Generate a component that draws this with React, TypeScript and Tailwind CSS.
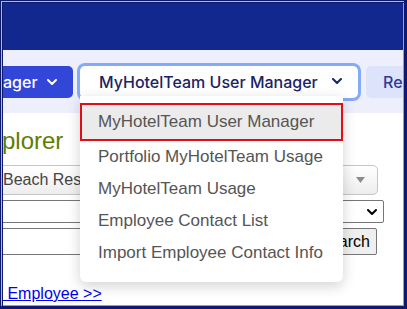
import React from 'react';

function Chevron({ className }: { className?: string }) {
  return (
    <svg className={className} width="10" height="6" viewBox="0 0 10 6" fill="none">
      <polyline points="1,1 5,5 9,1" stroke="currentColor" strokeWidth="2" strokeLinecap="round" strokeLinejoin="round" />
    </svg>
  );
}

export default function App() {
  const items = [
    'Portfolio MyHotelTeam Usage',
    'MyHotelTeam Usage',
    'Employee Contact List',
    'Import Employee Contact Info',
  ];

  return (
    <div className="w-[407px] h-[309px] bg-[#0d1a6e] pl-[1px] pt-[1px] pr-[3px] pb-[3px] overflow-hidden">
      <div className="w-full h-full border-t border-l border-[#aab6f2] pl-[1px] pt-[1px] bg-[#0d1a6e]">
        <div className="w-full h-full border-r border-b border-r-[#a0a0a0] border-b-[#a0a0a0]">
          <div className="relative w-full h-full bg-white overflow-hidden" style={{ fontFamily: '"Liberation Sans", Arial, sans-serif' }}>
            {/* header */}
            <div className="h-[47px] bg-[#13288e]" />

            {/* nav */}
            <div
              className="h-[63px] bg-[#edf0fc] flex items-center gap-[7px] overflow-hidden"
              style={{ fontFamily: 'Inter, "Noto Sans", sans-serif' }}
            >
              <div className="h-[32px] w-[70px] shrink-0 bg-[#3247d8] rounded-r-[5px] flex items-center text-white text-[16px] font-medium">
                <span>ager</span>
                <Chevron className="ml-[9px] text-white" />
              </div>
              <div className="h-[32px] w-[278px] shrink-0 bg-white rounded-[5px] ring-[3px] ring-[#84abf7] flex items-center pl-[19px] text-[16px] font-medium text-[#1b2363] mt-[1px]">
                <span>MyHotelTeam User Manager</span>
                <Chevron className="ml-auto mr-[16px] text-[#1b2363] -mt-[3px]" />
              </div>
              <div className="h-[32px] w-[80px] shrink-0 bg-[#dde3fb] rounded-[5px] flex items-center pl-[17px] text-[16px] font-medium text-[#2b3a9c] ml-[1px]">
                Re
              </div>
            </div>

            {/* page body */}
            <div className="flex flex-col pt-[13px]">
              <div className="text-[24px] leading-[30px] text-[#5e7d00] -ml-[1px]">plorer</div>
              <div className="mt-[9px] h-[30px] w-[381px] -ml-[6px] rounded-[5px] border border-[#c6c6c6] bg-gradient-to-b from-white to-[#ededed] flex items-center pl-[5px] pr-[12px] text-[16px] text-[#444]">
                <span className="flex-1">Beach Resort</span>
                <svg width="9" height="6" viewBox="0 0 9 6">
                  <polygon points="0,0 9,0 4.5,6" fill="#8c8c8c" />
                </svg>
              </div>
              <div className="mt-[5px] h-[23px] w-[387px] -ml-[6px] rounded-[2px] border border-[#767676] bg-white flex items-center justify-end pr-[6px]">
                <Chevron className="text-black" />
              </div>
              <div className="mt-[5px] flex items-center">
                <div className="h-[27px] w-[320px] -ml-[6px] border border-[#767676] bg-white" />
                <button className="ml-auto mr-[26px] h-[27px] px-[6px] border border-[#767676] rounded-[2px] bg-[#efefef] text-[16px] text-black">
                  Search
                </button>
              </div>
              <div className="mt-[30px] text-[16px] leading-[18px]">
                <a href="#" className="text-[#0000ee] underline">&nbsp;Employee &gt;&gt;</a>
              </div>
            </div>

            {/* dropdown menu */}
            <div className="absolute left-[77px] top-[93px] w-[263px] bg-white rounded-b-[6px] shadow-[0_4px_14px_rgba(0,0,0,0.18)] pt-[7px] pb-[13px] text-[17px] text-[#555]">
              <div className="h-[38px] border-2 border-[#e20d17] bg-[#ebebeb] flex items-center pl-[16px]">
                MyHotelTeam User Manager
              </div>
              {items.map((t) => (
                <div key={t} className="h-[32px] flex items-center pl-[18px]">
                  {t}
                </div>
              ))}
            </div>
          </div>
        </div>
      </div>
    </div>
  );
}
